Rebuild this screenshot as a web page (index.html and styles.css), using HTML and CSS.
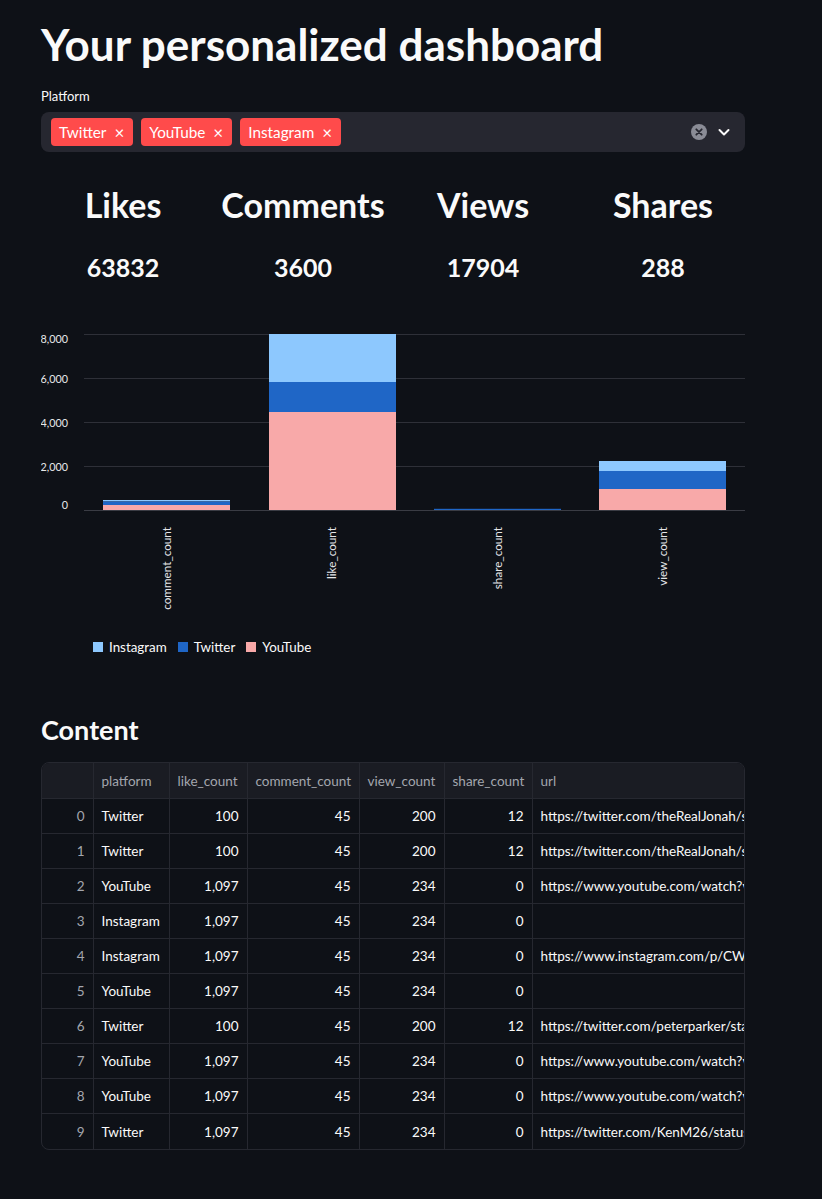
FILE: index.html
```html
<!DOCTYPE html>
<html>
<head>
<meta charset="utf-8">
<link rel="stylesheet" href="styles.css">
</head>
<body>
<main class="page">
  <h1 class="title">Your personalized dashboard</h1>

  <div class="field">
    <label class="field-label">Platform</label>
    <div class="select">
      <div class="tags">
        <span class="tag">Twitter<span class="tag-x">×</span></span>
        <span class="tag">YouTube<span class="tag-x">×</span></span>
        <span class="tag">Instagram<span class="tag-x">×</span></span>
      </div>
      <div class="select-icons">
        <svg class="clear" width="16" height="16" viewBox="0 0 16 16"><circle cx="8" cy="8" r="8" fill="#8a8c96"/><path d="M5.3 5.3 L10.7 10.7 M10.7 5.3 L5.3 10.7" stroke="#262730" stroke-width="1.8" stroke-linecap="round"/></svg>
        <svg class="chev" width="14" height="14" viewBox="0 0 14 14"><path d="M2.5 5 L7 9.5 L11.5 5" fill="none" stroke="#fafafa" stroke-width="2" stroke-linecap="round" stroke-linejoin="round"/></svg>
      </div>
    </div>
  </div>

  <div class="metrics">
    <div class="metric"><h2 class="metric-name">Likes</h2><div class="metric-val">63832</div></div>
    <div class="metric"><h2 class="metric-name">Comments</h2><div class="metric-val">3600</div></div>
    <div class="metric"><h2 class="metric-name">Views</h2><div class="metric-val">17904</div></div>
    <div class="metric"><h2 class="metric-name">Shares</h2><div class="metric-val">288</div></div>
  </div>

  <div class="chart">
    <svg width="704" height="300" viewBox="0 0 704 300" class="chart-svg">
      <g class="grid" stroke="#2e3038" stroke-width="1">
        <line x1="43" x2="704" y1="14.5" y2="14.5"/>
        <line x1="43" x2="704" y1="58.5" y2="58.5"/>
        <line x1="43" x2="704" y1="102.5" y2="102.5"/>
        <line x1="43" x2="704" y1="146.5" y2="146.5"/>
      </g>
      <g class="ylabels" font-size="10.8" fill="#e6e7ea" text-anchor="end">
        <text x="27" y="23">8,000</text>
        <text x="27" y="63">6,000</text>
        <text x="27" y="107">4,000</text>
        <text x="27" y="151">2,000</text>
        <text x="27" y="189">0</text>
      </g>
      <g class="bars">
        <rect x="62" y="180" width="127" height="1.5" fill="#8dc8fe"/>
        <rect x="62" y="181.5" width="127" height="3.5" fill="#1f66c6"/>
        <rect x="62" y="185" width="127" height="5" fill="#f8a9a9"/>

        <rect x="228" y="14" width="127" height="48" fill="#8dc8fe"/>
        <rect x="228" y="62" width="127" height="30" fill="#1f66c6"/>
        <rect x="228" y="92" width="127" height="98" fill="#f8a9a9"/>

        <rect x="393" y="188.8" width="127" height="1.2" fill="#1f66c6"/>

        <rect x="558" y="141" width="127" height="10" fill="#8dc8fe"/>
        <rect x="558" y="151" width="127" height="18" fill="#1f66c6"/>
        <rect x="558" y="169" width="127" height="21" fill="#f8a9a9"/>
      </g>
      <line x1="43" x2="704" y1="190.5" y2="190.5" stroke="#3a3c44" stroke-width="1"/>
      <g class="xlabels" font-size="11.7" fill="#e6e7ea" text-anchor="end">
        <text transform="translate(130 207) rotate(-90)">comment_count</text>
        <text transform="translate(295 207) rotate(-90)">like_count</text>
        <text transform="translate(461 207) rotate(-90)">share_count</text>
        <text transform="translate(626 207) rotate(-90)">view_count</text>
      </g>
    </svg>
    <div class="legend">
      <span class="legend-item"><span class="swatch sw-ig"></span>Instagram</span>
      <span class="legend-item"><span class="swatch sw-tw"></span>Twitter</span>
      <span class="legend-item"><span class="swatch sw-yt"></span>YouTube</span>
    </div>
  </div>

  <h3 class="section">Content</h3>

  <div class="table-wrap">
    <table class="grid-table">
      <colgroup>
        <col class="c-idx"><col class="c-plat"><col class="c-like"><col class="c-com"><col class="c-view"><col class="c-share"><col class="c-url">
      </colgroup>
      <thead>
        <tr><th></th><th>platform</th><th>like_count</th><th>comment_count</th><th>view_count</th><th>share_count</th><th>url</th></tr>
      </thead>
      <tbody>
        <tr><td class="idx">0</td><td>Twitter</td><td class="num">100</td><td class="num">45</td><td class="num">200</td><td class="num">12</td><td>https://twitter.com/theRealJonah/status/1</td></tr>
        <tr><td class="idx">1</td><td>Twitter</td><td class="num">100</td><td class="num">45</td><td class="num">200</td><td class="num">12</td><td>https://twitter.com/theRealJonah/status/1</td></tr>
        <tr><td class="idx">2</td><td>YouTube</td><td class="num">1,097</td><td class="num">45</td><td class="num">234</td><td class="num">0</td><td>https://www.youtube.com/watch?v=abc</td></tr>
        <tr><td class="idx">3</td><td>Instagram</td><td class="num">1,097</td><td class="num">45</td><td class="num">234</td><td class="num">0</td><td></td></tr>
        <tr><td class="idx">4</td><td>Instagram</td><td class="num">1,097</td><td class="num">45</td><td class="num">234</td><td class="num">0</td><td>https://www.instagram.com/p/CWTxyz</td></tr>
        <tr><td class="idx">5</td><td>YouTube</td><td class="num">1,097</td><td class="num">45</td><td class="num">234</td><td class="num">0</td><td></td></tr>
        <tr><td class="idx">6</td><td>Twitter</td><td class="num">100</td><td class="num">45</td><td class="num">200</td><td class="num">12</td><td>https://twitter.com/peterparker/status/1</td></tr>
        <tr><td class="idx">7</td><td>YouTube</td><td class="num">1,097</td><td class="num">45</td><td class="num">234</td><td class="num">0</td><td>https://www.youtube.com/watch?v=abc</td></tr>
        <tr><td class="idx">8</td><td>YouTube</td><td class="num">1,097</td><td class="num">45</td><td class="num">234</td><td class="num">0</td><td>https://www.youtube.com/watch?v=def</td></tr>
        <tr><td class="idx">9</td><td>Twitter</td><td class="num">1,097</td><td class="num">45</td><td class="num">234</td><td class="num">0</td><td>https://twitter.com/KenM26/status/1</td></tr>
      </tbody>
    </table>
  </div>
</main>
</body>
</html>
```

FILE: styles.css
```css
html, body {
  margin: 0;
  padding: 0;
  background: #0e1117;
  color: #fafafa;
  font-family: Lato, "Noto Sans", sans-serif;
}

.page {
  width: 704px;
  padding: 18px 0 40px 41px;
  box-sizing: content-box;
}

.title {
  margin: 0;
  font-size: 44px;
  font-weight: 700;
  line-height: 52px;
  letter-spacing: 0;
}

.field {
  margin-top: 16px;
}

.field-label {
  display: block;
  font-size: 13px;
  line-height: 20px;
  margin-bottom: 6px;
}

.select {
  height: 40px;
  background: #262730;
  border-radius: 8px;
  display: flex;
  align-items: center;
  justify-content: space-between;
  padding: 0 14px 0 10px;
}

.tags {
  display: flex;
  gap: 8px;
}

.tag {
  background: #ff4b4b;
  color: #fff;
  height: 28px;
  border-radius: 4px;
  display: inline-flex;
  align-items: center;
  padding: 0 9px 0 8px;
  font-size: 15.3px;
}

.tag-x {
  margin-left: 8px;
  font-size: 17px;
  line-height: 1;
}

.select-icons {
  display: flex;
  align-items: center;
  gap: 10px;
}

.clear, .chev {
  display: block;
}

.metrics {
  display: grid;
  grid-template-columns: repeat(4, 1fr);
  gap: 16px;
  margin-top: 28px;
  text-align: center;
}

.metric-name {
  margin: 0;
  font-size: 34px;
  font-weight: 700;
  line-height: 50px;
}

.metric-val {
  margin-top: 19px;
  font-size: 25px;
  font-weight: 700;
  line-height: 36px;
}

.chart {
  margin-top: 35px;
}

.chart-svg {
  display: block;
  font-family: Lato, "Noto Sans", sans-serif;
}

.legend {
  display: flex;
  gap: 11px;
  margin-left: 52px;
  margin-top: 19px;
  font-size: 13.4px;
  line-height: 16px;
}

.legend-item {
  display: inline-flex;
  align-items: center;
}

.swatch {
  width: 10px;
  height: 10px;
  margin-right: 6px;
}

.sw-ig { background: #8dc8fe; }
.sw-tw { background: #1f66c6; }
.sw-yt { background: #f8a9a9; }

.section {
  margin: 57px 0 0;
  font-size: 27px;
  font-weight: 700;
  line-height: 36px;
}

.table-wrap {
  margin-top: 14px;
  width: 702px;
  border: 1px solid #262830;
  border-radius: 8px;
  overflow: hidden;
}

.grid-table {
  border-collapse: collapse;
  table-layout: fixed;
  width: 880px;
  font-size: 13.5px;
}

.c-idx { width: 51px; }
.c-plat { width: 76px; }
.c-like { width: 78px; }
.c-com { width: 112px; }
.c-view { width: 85px; }
.c-share { width: 88px; }
.c-url { width: 390px; }

.grid-table th, .grid-table td {
  border: 1px solid #262830;
  padding: 0 8px;
  white-space: nowrap;
  overflow: hidden;
  text-overflow: clip;
  text-align: left;
}

.grid-table tr > :first-child { border-left: none; }
.grid-table thead tr > * { border-top: none; }
.grid-table tbody tr:last-child > * { border-bottom: none; }

.grid-table th {
  height: 35px;
  background: #1a1c23;
  color: #a3a6ae;
  font-weight: 400;
}

.grid-table td {
  height: 34px;
  color: #fafafa;
}

.grid-table tbody tr:last-child td { height: 35px; }

.grid-table td.num { text-align: right; }
.grid-table td.idx { text-align: right; color: #a3a6ae; }
```
